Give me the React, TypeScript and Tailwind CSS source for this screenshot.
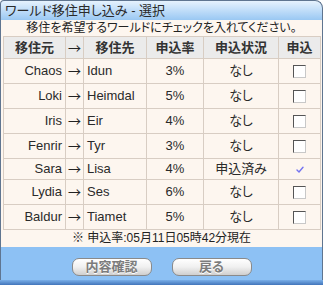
import React from "react";

type Row = { from: string; to: string; rate: string; status: string; applied: boolean };

const rows: Row[] = [
  { from: "Chaos", to: "Idun", rate: "3%", status: "なし", applied: false },
  { from: "Loki", to: "Heimdal", rate: "5%", status: "なし", applied: false },
  { from: "Iris", to: "Eir", rate: "4%", status: "なし", applied: false },
  { from: "Fenrir", to: "Tyr", rate: "3%", status: "なし", applied: false },
  { from: "Sara", to: "Lisa", rate: "4%", status: "申込済み", applied: true },
  { from: "Lydia", to: "Ses", rate: "6%", status: "なし", applied: false },
  { from: "Baldur", to: "Tiamet", rate: "5%", status: "なし", applied: false },
];

function Checkbox() {
  return (
    <span className="inline-block w-[13px] h-[13px] bg-white border border-t-[#555] border-l-[#555] border-r-[#c8c8c8] border-b-[#c8c8c8] align-middle" />
  );
}

function CheckMark() {
  return (
    <svg width="8" height="7" viewBox="0 0 8 7" className="inline-block align-middle">
      <path d="M1 4 L3 6 L7 1.2" fill="none" stroke="#7474f0" strokeWidth={1.4} strokeLinecap="round" />
    </svg>
  );
}

function Button({ label }: { label: string }) {
  return (
    <button className="w-[80px] h-[18px] rounded-[7px] border border-[#8a8a8a] bg-gradient-to-b from-white via-[#f0f0f0] to-[#cfcfcf] text-[13px] font-bold leading-[16px] text-[#7c7c7c] [text-shadow:0_1px_0_#fff]">
      {label}
    </button>
  );
}

export default function App() {
  const cell = "border border-[#d8cdc3]";
  const arrow = "font-['Noto_Sans_CJK_JP',sans-serif] text-[13px] text-[#222]";
  return (
    <div className="w-[323px] h-[285px] flex flex-col overflow-hidden font-['Liberation_Sans','Noto_Sans_CJK_JP',sans-serif] [font-feature-settings:'palt'] text-[#2a2a2a]">
      <div className="h-[20px] shrink-0 rounded-tl-[4px] rounded-tr-[8px] border border-b-0 border-[#5f7590] bg-gradient-to-b from-[#e6f2fd] to-[#9ac8f3] pl-[4px] text-[13px] leading-[19px] text-[#2a2a2a]">
        ワールド移住申し込み - 選択
      </div>
      <div className="flex-1 flex flex-col border-x border-[#5f7590] bg-[#fdf6ef]">
        <div className="h-[16px] text-center text-[12px] leading-[16px] text-[#222]">
          移住を希望するワールドにチェックを入れてください。
        </div>
        <table className="ml-[2px] w-[317px] table-fixed border-collapse border border-[#a9a9a9] text-[13px]">
          <colgroup>
            <col className="w-[62px]" />
            <col className="w-[18px]" />
            <col className="w-[63px]" />
            <col className="w-[57px]" />
            <col className="w-[75px]" />
            <col className="w-[42px]" />
          </colgroup>
          <thead>
            <tr className="h-[22px] bg-[#ebebeb] font-black text-[#333]">
              <th className={cell}>移住元</th>
              <th className={cell + " font-normal " + arrow}>→</th>
              <th className={cell}>移住先</th>
              <th className={cell}>申込率</th>
              <th className={cell}>申込状況</th>
              <th className={cell}>申込</th>
            </tr>
          </thead>
          <tbody>
            {rows.map((r) => (
              <tr key={r.from} className={r.applied ? "h-[20px]" : "h-[25px]"}>
                <td className={cell + " text-right pr-[3px]"}>{r.from}</td>
                <td className={cell + " text-center " + arrow}>→</td>
                <td className={cell + " pl-[3px]"}>{r.to}</td>
                <td className={cell + " text-center"}>{r.rate}</td>
                <td className={cell + " text-center"}>{r.status}</td>
                <td className={cell + " text-center leading-none"}>
                  {r.applied ? <CheckMark /> : <Checkbox />}
                </td>
              </tr>
            ))}
          </tbody>
        </table>
        <div className="h-[17px] text-center text-[12px] leading-[17px] text-[#222]">
          ※ 申込率:05月11日05時42分現在
        </div>
      </div>
      <div className="h-[33px] shrink-0 flex items-start justify-center gap-[20px] pt-[11px] border-x border-[#5f7590] bg-[#8dc1f4]">
        <Button label="内容確認" />
        <Button label="戻る" />
      </div>
      <div className="h-[7px] shrink-0 bg-gradient-to-b from-[#79aee8] to-[#2d5fa8]" />
    </div>
  );
}
